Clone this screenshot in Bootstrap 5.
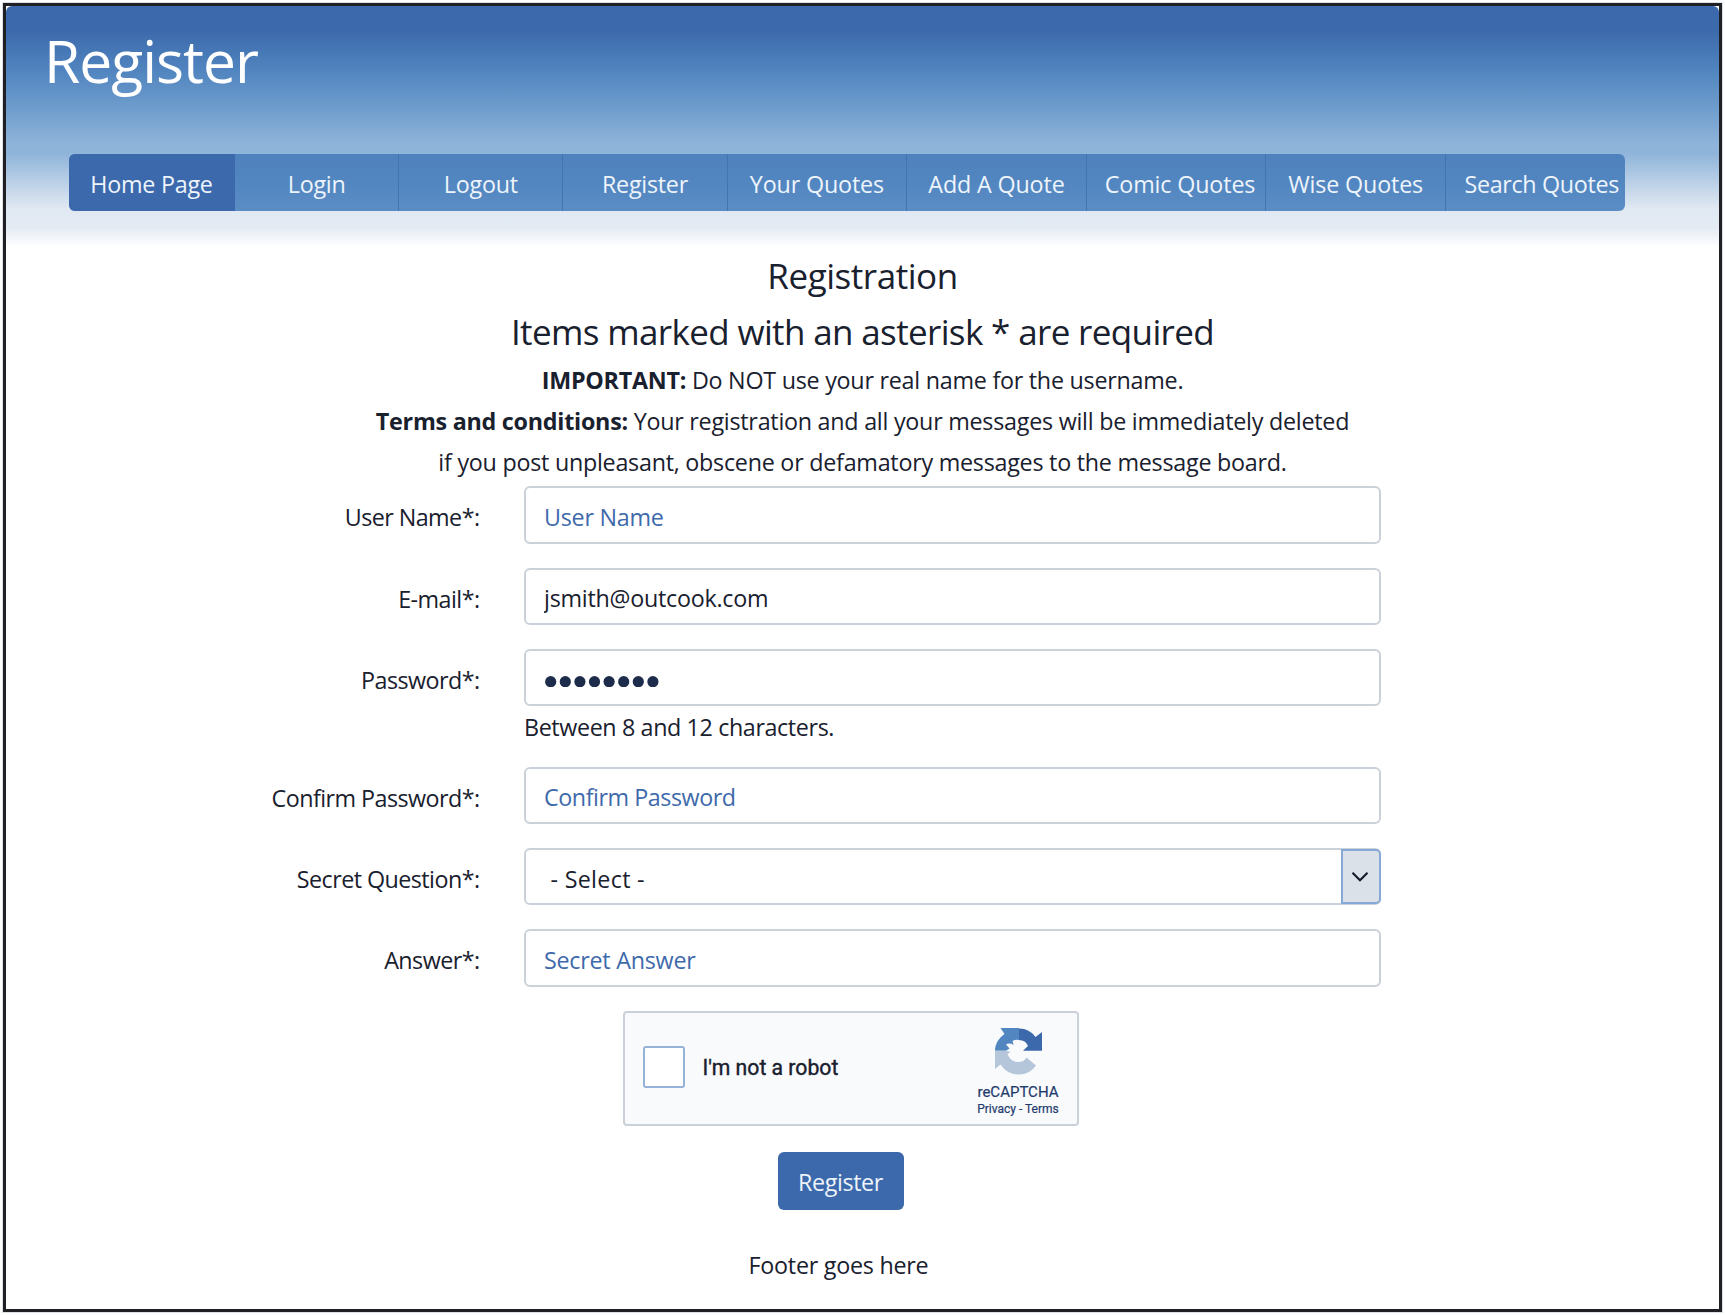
<!DOCTYPE html>
<html lang="en">
<head>
<meta charset="utf-8">
<title>Register</title>
<link href="https://cdn.jsdelivr.net/npm/bootstrap@5.3.0/dist/css/bootstrap.min.css" rel="stylesheet">
<style>
body{background:#fcfdfd;font-family:"Open Sans","Noto Sans",sans-serif;font-size:23.3px;color:#19202e;letter-spacing:-.25px;overflow:hidden}
.page-frame{width:1719px;height:1309px;margin:3px;border:3px solid #1f1f24;background:#fff;box-shadow:0 0 0 1px #dcdfe5}
.page-head{height:241px;padding-top:14px;border-radius:6px 6px 0 0;background:linear-gradient(#3c69ab 0,#3c69ab 24px,#5286c0 66px,#709ecd 104px,#8fb4da 138px,#90b5da 148px,#e0e8f2 202px,#e4ebf3 222px,#fff 241px)}
.page-title{font-size:58.8px;line-height:80px;font-weight:400;color:#fff;letter-spacing:-1px;padding-left:38px}
.nav-bar{width:1556px;height:57px;margin:54px 0 0 63px;border-radius:6px;overflow:hidden;background:linear-gradient(#4f82bd,#5286c0 50%,#5b8dc5)}
.nav-bar .nav-link{padding:4px 0 0;color:#eef4fb;white-space:nowrap;border-right:1px solid #4174b3;display:flex;align-items:center;justify-content:center}
.nav-bar .nav-link:last-child{border-right:0;justify-content:flex-start;padding-left:18.5px;letter-spacing:-.32px}
.nav-bar .nav-link.active{background:#3c69ab;border-color:#3c69ab}
.w-a{width:166px}.w-b{width:164.2px}.w-c{width:179.6px}
.nav-bar .w-c{letter-spacing:-.15px}
.nav-bar .shift-r{padding-left:8px}
.sub-head{font-size:35px;line-height:56px;font-weight:400;margin:0;letter-spacing:-.64px;padding-top:1px;margin-bottom:-1px}
.sub-first{letter-spacing:-.45px}
.intro{line-height:40.8px;margin:1px 0 3.8px}
.intro b{font-weight:700}
.field-label{width:473.5px;margin-right:44.5px;line-height:57.4px;padding-top:3px;height:57.4px;letter-spacing:-.55px;text-align:right}
.field-row{margin-bottom:24px}
.field-box{width:857px}
.form-control,.pick{height:57.4px;border:2px solid #cbd1d9;border-radius:6px;font-size:23.3px;color:#19202e;padding:4px 18px 0;letter-spacing:inherit;background:#fff}
.form-control::placeholder{color:#3e6aab;opacity:1}
.ls-pass{letter-spacing:-.45px}
.hint{line-height:36px;margin:2.4px 0 -2.1px;letter-spacing:-.38px}
.pick{padding:0 0 0 24.5px}
.pick-text{padding-top:5px;letter-spacing:.3px}
.pick-arrow{width:40px;margin:-1px -2px -1px 0;border:2px solid #86a9d5;border-radius:0 5px 5px 0;background:#dbe1e8;padding-right:2px}
.captcha{width:456px;height:115px;margin-left:616.5px;border:2px solid #cbd1d9;border-radius:4px;background:#f8fafc;padding-left:18px;font-family:Roboto,sans-serif;letter-spacing:0}
.captcha-box{width:42px;height:42px;margin-top:33px;border:2px solid #96b2d7;border-radius:3px;background:#fff}
.captcha-text{font-size:21.2px;line-height:24px;font-weight:400;-webkit-text-stroke:.4px #19202e;margin:43.5px 0 0 18px}
.captcha-logo{width:84px;margin:15.5px 16.5px 0 auto;line-height:17px;font-size:15px;color:#1f3b6c;-webkit-text-stroke:.2px #1f3b6c}
.captcha-logo svg{margin-bottom:8.5px}
.captcha-logo small{font-size:12px;line-height:17px}
.btn-reg{width:126px;height:58px;margin:26px 0 0 771.5px;background:#3c69ab;color:#eef4fb;border-radius:6px;font-size:23.3px;padding:4px 0 0;border:0;letter-spacing:-.4px}
.foot{width:1665px;margin:37.4px 0 0;line-height:36px}
</style>
<script src="https://cdn.jsdelivr.net/npm/bootstrap@5.3.0/dist/js/bootstrap.bundle.min.js"></script>
</head>
<body>
<div class="page-frame">
  <header class="page-head">
    <h1 class="page-title m-0 pt-0">Register</h1>
    <nav class="nav nav-bar flex-nowrap">
      <a class="nav-link active w-a" href="#">Home Page</a>
      <a class="nav-link w-b" href="#">Login</a>
      <a class="nav-link w-b" href="#">Logout</a>
      <a class="nav-link w-b" href="#">Register</a>
      <a class="nav-link w-c" href="#">Your Quotes</a>
      <a class="nav-link w-c" href="#">Add A Quote</a>
      <a class="nav-link w-c shift-r" href="#">Comic Quotes</a>
      <a class="nav-link w-c" href="#">Wise Quotes</a>
      <a class="nav-link flex-grow-1" href="#">Search Quotes</a>
    </nav>
  </header>
  <main>
    <h2 class="sub-head sub-first text-center">Registration</h2>
    <h3 class="sub-head text-center">Items marked with an asterisk * are required</h3>
    <p class="intro text-center"><b>IMPORTANT:</b> Do NOT use your real name for the username.<br><b>Terms and conditions:</b> Your registration and all your messages will be immediately deleted<br>if you post unpleasant, obscene or defamatory messages to the message board.</p>
    <form>
      <div class="d-flex field-row"><label class="field-label" for="user">User Name*:</label><div class="field-box"><input class="form-control" id="user" placeholder="User Name"></div></div>
      <div class="d-flex field-row"><label class="field-label" for="mail">E-mail*:</label><div class="field-box"><input class="form-control" id="mail" value="jsmith@outcook.com"></div></div>
      <div class="d-flex field-row"><span class="field-label">Password*:</span><div class="field-box">
        <div class="form-control d-flex align-items-center"><svg width="116" height="14" fill="#1c2c4a"><circle cx="6.7" cy="8.7" r="5.6"/><circle cx="21.3" cy="8.7" r="5.6"/><circle cx="35.9" cy="8.7" r="5.6"/><circle cx="50.5" cy="8.7" r="5.6"/><circle cx="65.1" cy="8.7" r="5.6"/><circle cx="79.7" cy="8.7" r="5.6"/><circle cx="94.3" cy="8.7" r="5.6"/><circle cx="108.9" cy="8.7" r="5.6"/></svg></div>
        <div class="hint">Between 8 and 12 characters.</div></div></div>
      <div class="d-flex field-row"><label class="field-label" for="conf">Confirm Password*:</label><div class="field-box"><input class="form-control ls-pass" id="conf" placeholder="Confirm Password"></div></div>
      <div class="d-flex field-row"><span class="field-label">Secret Question*:</span><div class="field-box pick d-flex justify-content-between"><span class="align-self-center pick-text">- Select -</span>
        <span class="pick-arrow d-flex align-items-center justify-content-center"><svg width="18" height="12" viewBox="0 0 18 12" fill="none" stroke="#141c2c" stroke-width="2.2"><path d="M1.5 1.8 9 9.3 16.5 1.8"/></svg></span></div></div>
      <div class="d-flex field-row"><label class="field-label" for="ans">Answer*:</label><div class="field-box"><input class="form-control" id="ans" placeholder="Secret Answer"></div></div>
      <div class="captcha d-flex align-items-start">
        <span class="captcha-box"></span><span class="captcha-text">I'm not a robot</span>
        <div class="captcha-logo text-center">
          <svg class="d-block mx-auto" width="47" height="47" viewBox="0 0 47 47">
            <path fill="#5286c0" d="M24 0H5.500L9.500 6C3.500 10.500 0 16 0 22.700H11L14.500 20.500 11 16.500Q14.500 14.500 18.500 17L17.500 13Q20.500 11 24 12z"/>
            <path fill="#3c69ab" d="M24 0.500C31 0.500 36.500 3.500 40.500 9L47 4V22.700H28L33 18C31.500 14 28.500 12 24 12z"/>
            <path fill="#b5c5da" d="M0 22.700H11L15.500 24 12.500 26C14.500 31.500 18.500 34 23.500 34 27 34 29.500 32.500 31.500 29.500L41 37.500C36.500 43.500 31 46.500 23.500 46.500 15.500 46.500 9.500 42.500 5.500 36.500L0 41z"/>
          </svg>
          <div>reCAPTCHA</div><small class="d-block">Privacy - Terms</small>
        </div>
      </div>
      <button type="button" class="btn btn-reg d-block">Register</button>
    </form>
  </main>
  <footer class="foot text-center">Footer goes here</footer>
</div>
</body>
</html>
